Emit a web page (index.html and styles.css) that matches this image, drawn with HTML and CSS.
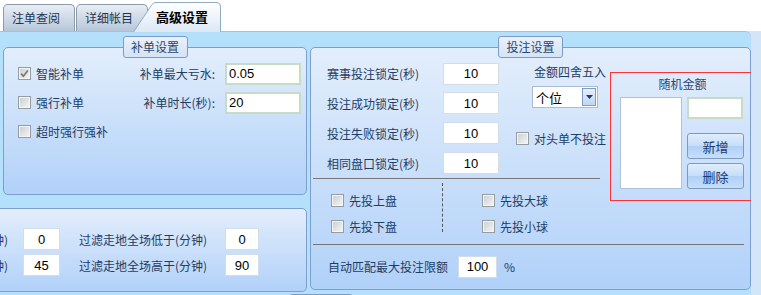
FILE: index.html
```html
<!DOCTYPE html>
<html lang="zh-CN">
<head>
    <meta charset="UTF-8">
    <title>高级设置</title>
    <link rel="stylesheet" href="styles.css">
</head>
<body>
    <div class="tabs">
        <div class="tab">注单查阅</div>
        <div class="tab">详细帐目</div>
        <div class="tab active">
            <svg width="88" height="30" viewBox="0 0 88 30">
                <defs>
                    <linearGradient id="tabGrad" x1="0" y1="0" x2="0" y2="1">
                        <stop offset="0" stop-color="#ffffff"/>
                        <stop offset="1" stop-color="#dce8f5"/>
                    </linearGradient>
                </defs>
                <path d="M0.5 30 L19 2.5 Q20.5 0.5 23 0.5 L83 0.5 Q87.5 0.5 87.5 5 L87.5 30" fill="url(#tabGrad)" stroke="#93a9c4"/>
            </svg>
            <span>高级设置</span>
        </div>
    </div>

    <div class="panel">
        <div class="col-left">
            <!-- 补单设置 -->
            <div class="group bd">
                <div class="group-title">补单设置</div>
                <div class="bd-grid">
                    <label class="check"><span class="cb"><svg width="9" height="9" viewBox="0 0 9 9"><path d="M1.2 4.6 L3.4 7.2 L7.8 1.4" fill="none" stroke="#777" stroke-width="1.7"/></svg></span>智能补单</label>
                    <span class="lbl">补单最大亏水:</span>
                    <input class="inp-g" value="0.05">
                    <label class="check"><span class="cb"></span>强行补单</label>
                    <span class="lbl">补单时长(秒):</span>
                    <input class="inp-g" value="20">
                    <label class="check"><span class="cb"></span>超时强行强补</label>
                </div>
            </div>

            <!-- 过滤 -->
            <div class="group filter">
                <div class="frow">
                    <span class="flbl"><span>过滤走地半场低于(分钟)</span></span>
                    <input class="inp fi" value="0">
                    <span class="flbl2">过滤走地全场低于(分钟)</span>
                    <input class="inp fi2" value="0">
                </div>
                <div class="frow">
                    <span class="flbl"><span>过滤走地半场高于(分钟)</span></span>
                    <input class="inp fi" value="45">
                    <span class="flbl2">过滤走地全场高于(分钟)</span>
                    <input class="inp fi2" value="90">
                </div>
            </div>
        </div>

        <!-- 投注设置 -->
        <div class="group tz">
            <div class="group-title">投注设置</div>
            <div class="tz-body">
                <div class="tz-main">
                    <div class="tz-upper">
                        <div class="tz-rows">
                            <div class="trow"><span class="tlbl">赛事投注锁定(秒)</span><input class="inp ti" value="10"></div>
                            <div class="trow"><span class="tlbl">投注成功锁定(秒)</span><input class="inp ti" value="10"></div>
                            <div class="trow"><span class="tlbl">投注失败锁定(秒)</span><input class="inp ti" value="10"></div>
                            <div class="trow"><span class="tlbl">相同盘口锁定(秒)</span><input class="inp ti" value="10"></div>
                        </div>
                        <div class="tz-mid">
                            <div class="round-lbl">金额四舍五入</div>
                            <div class="select">
                                <span>个位</span>
                                <span class="drop"><svg width="7" height="4" viewBox="0 0 7 4"><path d="M0 0 H7 L3.5 4 Z" fill="#1e3a6a"/></svg></span>
                            </div>
                            <label class="check head"><span class="cb"></span>对头单不投注</label>
                        </div>
                    </div>
                    <div class="sep"></div>
                    <div class="tz-checks">
                        <div class="ccol first">
                            <label class="check crow"><span class="cb"></span>先投上盘</label>
                            <label class="check crow"><span class="cb"></span>先投下盘</label>
                        </div>
                        <div class="ccol second">
                            <label class="check crow"><span class="cb"></span>先投大球</label>
                            <label class="check crow"><span class="cb"></span>先投小球</label>
                        </div>
                    </div>
                </div>

                <div class="random">
                    <div class="random-title">随机金额</div>
                    <div class="random-row">
                        <div class="listbox"></div>
                        <div class="random-side">
                            <input class="inp-g rnd" value="">
                            <button class="btn add">新增</button>
                            <button class="btn">删除</button>
                        </div>
                    </div>
                </div>
            </div>
            <div class="sep full"></div>
            <div class="limit">
                <span>自动匹配最大投注限额</span>
                <input class="inp li" value="100">
                <span class="pct">%</span>
            </div>
        </div>

        <div class="next-title"></div>
    </div>
</body>
</html>
```

FILE: styles.css
```css
* {
    margin: 0;
    padding: 0;
    box-sizing: border-box;
}
body {
    width: 761px;
    height: 295px;
    overflow: hidden;
    background: #d3e5f8;
    font-family: "Noto Sans CJK SC", "Noto Sans", sans-serif;
    font-size: 12px;
    color: #1f3c64;
}
input, button {
    font-family: "Liberation Sans", "Noto Sans CJK SC", sans-serif;
    outline: none;
}

/* tabs */
.tabs {
    height: 31px;
    background: #fff;
    display: flex;
    align-items: flex-end;
    padding-left: 3px;
}
.tab {
    width: 72px;
    height: 27px;
    margin-right: 1px;
    border: 1px solid #8d9bab;
    border-bottom: none;
    border-radius: 5px 5px 0 0;
    background: linear-gradient(#e8eef4, #b6c7d9);
    padding-left: 8px;
    line-height: 25px;
    color: #1c365a;
}
.tab.active {
    position: relative;
    width: 88px;
    height: 30px;
    margin-left: -16px;
    margin-bottom: -1px;
    border: none;
    background: none;
    padding-left: 23px;
    font-size: 13px;
    font-weight: bold;
    line-height: 30px;
    color: #000;
}
.tab.active svg {
    position: absolute;
    left: 0;
    top: 0;
}
.tab.active span {
    position: relative;
}

/* panel */
.panel {
    display: grid;
    grid-template-columns: 304px 441px;
    grid-template-rows: 245px 20px;
    column-gap: 3px;
    align-items: start;
    width: 751px;
    height: 264px;
    overflow: hidden;
    background: #b4e0fb;
    border-top: 1px solid #a7c0da;
    border-radius: 0 6px 0 0;
    padding: 15px 0 0 3px;
}
.col-left {
    display: flex;
    flex-direction: column;
    gap: 13px;
}
.group {
    display: flex;
    flex-direction: column;
    border: 1px solid #7d9fce;
    border-radius: 5px;
    background: linear-gradient(#e3eefc, #b1d1f9);
}
.group-title {
    align-self: center;
    width: 65px;
    height: 22px;
    margin: -12px 0 1px;
    border: 1px solid #7c9bc6;
    border-radius: 3px;
    background: linear-gradient(#e9f1fb, #d5e3f6);
    text-align: center;
    line-height: 20px;
    color: #2a4772;
}

/* checkboxes */
.check {
    display: flex;
    align-items: center;
    gap: 5px;
    white-space: nowrap;
}
.cb {
    width: 13px;
    height: 13px;
    flex-shrink: 0;
    display: flex;
    align-items: center;
    justify-content: center;
    border: 1px solid #959ca3;
    background: linear-gradient(135deg, #c9cdd1, #f6f7f8);
    box-shadow: inset 0 0 0 1px #f4f4f4;
}

/* inputs */
.inp-g {
    height: 22px;
    border: 2px solid #c8dcc5;
    background: #fff;
    padding-left: 2px;
    font-size: 13px;
    color: #000;
}
.inp {
    height: 22px;
    border: 1px solid #d3dde8;
    background: #fff;
    text-align: center;
    font-size: 13px;
    color: #000;
}

/* 补单设置 */
.bd {
    height: 148px;
}
.bd-grid {
    display: grid;
    grid-template-columns: 100px 107px 76px;
    grid-auto-rows: 29px;
    align-items: center;
    padding-left: 14px;
}
.bd-grid .lbl {
    text-align: right;
    padding-right: 10px;
}
.bd-grid .inp-g {
    width: 76px;
}

/* 过滤 */
.filter {
    width: 464px;
    height: 84px;
    margin-left: -160px;
    padding-top: 17px;
}
.frow {
    display: flex;
    align-items: center;
    height: 26px;
}
.flbl {
    display: flex;
    justify-content: flex-end;
    width: 164px;
    overflow: hidden;
    white-space: nowrap;
}
.flbl span {
    flex-shrink: 0;
}
.fi {
    width: 37px;
    margin-left: 15px;
}
.flbl2 {
    width: 146px;
    margin-left: 19px;
}
.fi2 {
    width: 34px;
}

/* 投注设置 */
.tz {
    height: 243px;
}
.tz-body {
    display: flex;
    height: 185px;
}
.tz-main {
    width: 287px;
    margin-left: 2px;
    flex-shrink: 0;
}
.tz-upper {
    display: flex;
}
.tz-rows {
    padding-left: 14px;
}
.trow {
    display: flex;
    align-items: center;
    height: 30px;
}
.trow:first-child {
    height: 29px;
}
.tlbl {
    width: 116px;
}
.ti {
    width: 56px;
}
.tz-mid {
    margin-left: 17px;
}
.round-lbl {
    margin-top: 4px;
    padding-left: 18px;
    line-height: 18px;
}
.select {
    display: flex;
    align-items: center;
    justify-content: space-between;
    width: 66px;
    height: 22px;
    margin: 5px 0 0 16px;
    border: 1px solid #a9bcd4;
    background: #fff;
    padding: 0 1px 0 3px;
    font-size: 13px;
    color: #000;
}
.drop {
    display: flex;
    align-items: center;
    justify-content: center;
    width: 14px;
    height: 18px;
    border: 1px solid #7f9cc4;
    background: linear-gradient(#e6effb, #c0d6f2);
}
.check.head {
    height: 16px;
    margin-top: 22px;
}
.sep {
    height: 1px;
    background: #777;
}
.sep.full {
    margin: 0 6px 0 2px;
}
.tz-checks {
    display: flex;
    margin-top: 4px;
}
.ccol {
    height: 49px;
    padding-top: 4px;
}
.ccol.first {
    width: 130px;
    padding-left: 18px;
    border-right: 1px dashed #555;
}
.ccol.second {
    padding-left: 39px;
}
.crow {
    height: 26px;
}

/* 随机金额 */
.random {
    flex-shrink: 0;
    width: 142px;
    height: 129px;
    margin: 13px 0 0 10px;
    border: 1px solid #ff3333;
    padding-left: 9px;
}
.random-title {
    height: 22px;
    line-height: 22px;
    text-align: center;
    padding-right: 6px;
    color: #2a4772;
}
.random-row {
    display: flex;
    gap: 5px;
    margin-top: 2px;
}
.listbox {
    width: 62px;
    height: 92px;
    border: 1px solid #aec3dd;
    background: #fff;
}
.random-side {
    display: flex;
    flex-direction: column;
}
.rnd {
    width: 56px;
}
.btn {
    width: 57px;
    height: 26px;
    margin-top: 4px;
    border: 1px solid #7f9abf;
    border-radius: 3px;
    background: linear-gradient(#dfedfc, #c6ddf9 50%, #b1d0f8 52%, #c6defa);
    font-family: "Noto Sans CJK SC", sans-serif;
    font-size: 13px;
    color: #1e3a6a;
}
.btn.add {
    margin-top: 14px;
}

.limit {
    display: flex;
    align-items: center;
    height: 43px;
    padding-left: 17px;
}
.li {
    width: 39px;
    margin-left: 10px;
}
.pct {
    margin-left: 7px;
}

.next-title {
    grid-column: 1 / 3;
    width: 64px;
    height: 20px;
    margin: 2px 0 0 286px;
    border: 1px solid #7c9bc6;
    border-radius: 3px;
    background: #dce8f8;
}
```
